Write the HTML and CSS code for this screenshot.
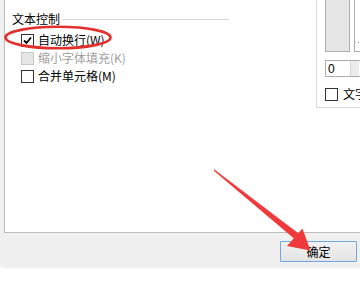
FILE: index.html
```html
<!DOCTYPE html>
<html lang="zh-CN">
<head>
  <meta charset="UTF-8" />
  <meta name="viewport" content="width=device-width, initial-scale=1.0" />
  <title>设置单元格格式</title>
  <link rel="stylesheet" href="styles.css">
</head>
<body>
  <div class="dialog">
    <div class="panel">
      <div class="text-group">
        <div class="group-title">
          <span>文本控制</span>
          <span class="group-line"></span>
        </div>
        <div class="option">
          <span class="box checked">
            <svg width="9" height="9" viewBox="0 0 9 9"><path d="M1 4.5 L3.5 7 L8 1.5" fill="none" stroke="#000" stroke-width="1.8"/></svg>
          </span>
          <span>自动换行(W)</span>
        </div>
        <div class="option disabled">
          <span class="box"></span>
          <span>缩小字体填充(K)</span>
        </div>
        <div class="option">
          <span class="box"></span>
          <span>合并单元格(M)</span>
        </div>
      </div>

      <div class="orient-group">
        <div class="orient-boxes">
          <div class="orient-gray"></div>
          <div class="orient-white"><span class="dot"></span></div>
        </div>
        <div class="spin">
          <span class="spin-value">0</span>
          <span class="spin-btn"></span>
        </div>
        <div class="option">
          <span class="box"></span>
          <span class="clip-text">文字</span>
        </div>
      </div>
    </div>

    <div class="footer">
      <button class="ok-btn">确定</button>
    </div>
  </div>

  <svg class="marks" width="360" height="301" viewBox="0 0 360 301">
    <ellipse cx="58" cy="37.5" rx="52.5" ry="10.8" fill="none" stroke="#e2302e" stroke-width="2.6"/>
    <polygon points="213.6,170.4 214.4,169.6 298.6,233.6 294,238.6" fill="#f0393a"/>
    <polygon points="287,246 302.4,228.4 310.5,250.5" fill="#f0393a"/>
  </svg>
</body>
</html>
```

FILE: styles.css
```css
body {
  margin: 0;
  background: #fff;
  font-family: "Noto Sans CJK SC", "Liberation Sans", sans-serif;
  font-size: 12px;
  color: #000;
}
.dialog {
  width: 360px;
  height: 268px;
  background: #f0f0f0;
  border-bottom-left-radius: 4px;
}
.panel {
  margin-left: 4px;
  height: 233px;
  background: #fff;
  border-left: 1px solid #bcbcbc;
  border-bottom: 1px solid #bcbcbc;
  display: flex;
  box-sizing: border-box;
}
.text-group {
  width: 217px;
  padding: 12px 0 0 7px;
}
.group-title {
  display: flex;
  align-items: center;
  height: 14px;
  line-height: 14px;
}
.group-line {
  flex: 1;
  border-top: 1px solid #d5d5d5;
  margin-left: 2px;
  margin-top: 1px;
}
.text-group .option {
  margin-left: 9px;
}
.option {
  display: flex;
  align-items: center;
  gap: 4px;
  height: 14px;
  line-height: 14px;
  margin-top: 4px;
}
.text-group .option:nth-child(2) {
  margin-top: 7px;
}
.box {
  width: 11px;
  height: 11px;
  border: 1px solid #333;
  background: #fff;
  display: flex;
  align-items: center;
  justify-content: center;
  flex: none;
}
.option.disabled {
  color: #a0a0a0;
}
.option.disabled .box {
  border-color: #c8c8c8;
  background: #e6e6e6;
}
.orient-group {
  margin-left: auto;
  width: 35px;
  height: 107px;
  padding-left: 8px;
  border-left: 1px solid #dcdcdc;
  border-bottom: 1px solid #dcdcdc;
  overflow: hidden;
}
.orient-boxes {
  display: flex;
  gap: 4px;
  height: 52px;
}
.orient-gray {
  width: 23px;
  flex: none;
  background: #e6e6e6;
  border: 1px solid #adadad;
  border-top: none;
}
.orient-white {
  width: 20px;
  flex: none;
  border: 1px solid #adadad;
  border-top: none;
  position: relative;
}
.dot {
  position: absolute;
  left: 3px;
  top: 42px;
  width: 1px;
  height: 1px;
  background: #888;
}
.spin {
  margin-top: 8px;
  width: 40px;
  height: 17px;
  border: 1px solid #abadb3;
  box-sizing: border-box;
  display: flex;
  align-items: center;
}
.spin-value {
  padding-left: 2px;
  width: 22px;
  font-family: "Liberation Sans", sans-serif;
  font-size: 12px;
}
.spin-btn {
  width: 8px;
  height: 15px;
  background: #ececec;
  border-left: 1px solid #d4d4d4;
}
.orient-group .option {
  margin-top: 10px;
  gap: 5px;
}
.clip-text {
  width: 20px;
  overflow: hidden;
  white-space: nowrap;
}
.footer {
  display: flex;
  justify-content: flex-end;
  padding: 8px 3px 0 0;
}
.ok-btn {
  width: 77px;
  height: 21px;
  border: 1px solid #6fa8dc;
  border-radius: 1px;
  background: linear-gradient(#f2f2f2, #e4e4e4);
  font-family: "Noto Sans CJK SC", sans-serif;
  font-size: 12px;
  line-height: 17px;
  padding: 0;
  color: #000;
}
.marks {
  position: absolute;
  left: 0;
  top: 0;
  pointer-events: none;
}
```
